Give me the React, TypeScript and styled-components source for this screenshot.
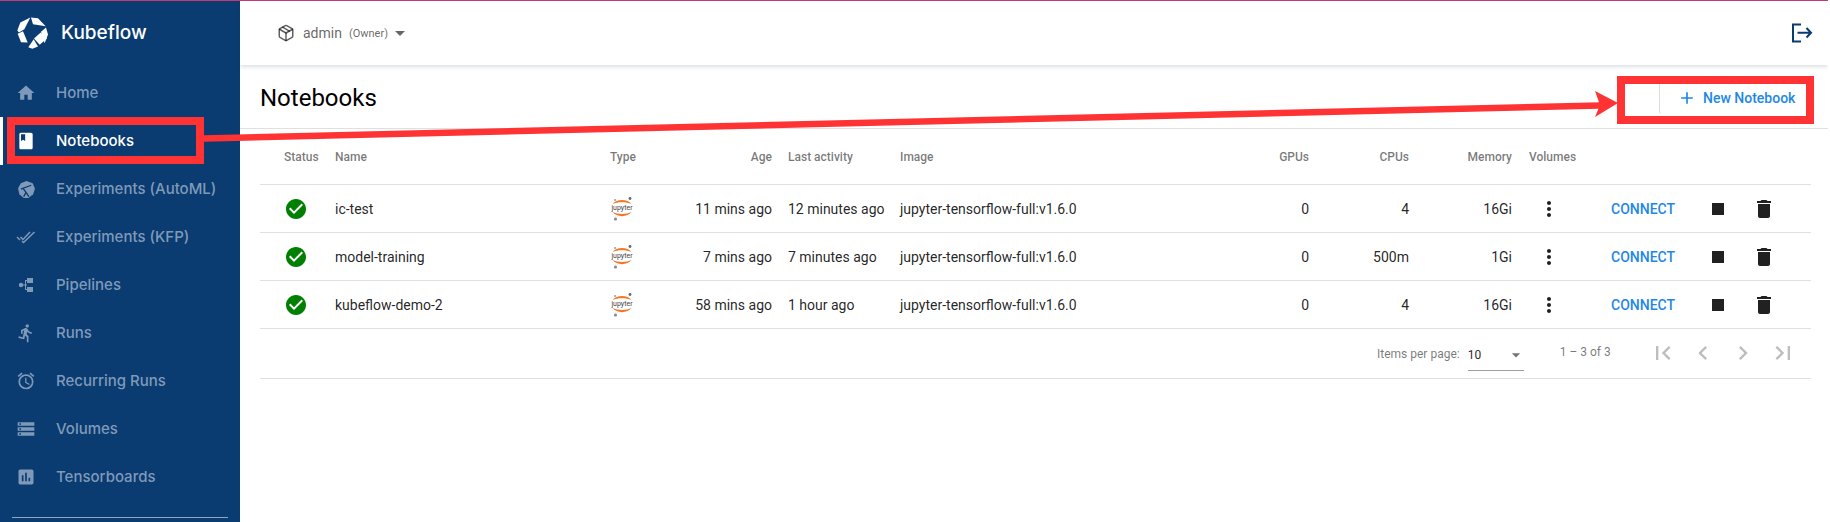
import React from "react";
import styled, { createGlobalStyle } from "styled-components";
import {
  MdHome, MdBook, MdDirectionsRun, MdAlarm, MdStorage, MdAssessment, MdStop, MdDelete,
  MdMoreVert, MdCheckCircle, MdFirstPage, MdLastPage, MdChevronLeft, MdChevronRight, MdAdd, MdArrowDropDown,
} from "react-icons/md";
import { Package } from "lucide-react";

const Global = createGlobalStyle`
  html, body { margin: 0; padding: 0; background: #fff; }
  body { font-family: Roboto, "Liberation Sans", sans-serif; }
`;

const Page = styled.div`
  position: relative;
  width: 1828px;
  height: 522px;
  overflow: hidden;
  display: flex;
  flex-direction: column;
`;
const Stripe = styled.div`
  height: 1px;
  flex: none;
  background: #c23a78;
`;
const Shell = styled.div`
  flex: 1;
  display: flex;
  min-height: 0;
`;
const Sidebar = styled.nav`
  width: 240px;
  flex: none;
  background: #0a3b71;
  display: flex;
  flex-direction: column;
`;
const Brand = styled.div`
  height: 68px;
  flex: none;
  display: flex;
  align-items: flex-start;
  padding: 16px 0 0 17px;
  box-sizing: border-box;
  gap: 13px;
`;
const BrandName = styled.span`
  font-family: Inter, sans-serif;
  font-size: 19px;
  font-weight: 500;
  color: #fff;
  line-height: 32px;
`;
const NavItem = styled.div<{ $active?: boolean }>`
  height: 48px;
  flex: none;
  display: flex;
  align-items: center;
  box-sizing: border-box;
  border-left: 3px solid ${(p) => (p.$active ? "#fff" : "transparent")};
  color: ${(p) => (p.$active ? "#fff" : "#7f9ab9")};
  font-family: Inter, sans-serif;
  font-size: 15px;
  font-weight: 500;
`;
const NavIcon = styled.span`
  width: 24px;
  height: 24px;
  margin-left: 11px;
  margin-right: 19px;
  display: flex;
  align-items: center;
  justify-content: center;
  font-size: 20px;
`;
const NavLabel = styled.span`
  margin-bottom: 2px;
  margin-left: -1px;
`;
const NavRule = styled.div`
  margin: 16px 12px 0;
  height: 1px;
  flex: none;
  background: #8fa6c1;
`;
const Main = styled.main`
  flex: 1;
  min-width: 0;
  display: flex;
  flex-direction: column;
`;
const TopBar = styled.header`
  height: 64px;
  flex: none;
  display: flex;
  align-items: center;
  padding: 0 15px 0 37px;
  box-sizing: border-box;
  box-shadow: 0 2px 4px rgba(40, 60, 90, 0.16);
  position: relative;
  color: rgba(0, 0, 0, 0.62);
`;
const Namespace = styled.span`
  font-size: 14px;
  margin-left: 8px;
`;
const Role = styled.span`
  font-size: 11px;
  margin-left: 7px;
`;
const Caret = styled.span`
  display: flex;
  font-size: 24px;
  color: rgba(0, 0, 0, 0.6);
`;
const LogoutButton = styled.span`
  margin-left: auto;
  display: flex;
`;
const TitleBar = styled.div`
  height: 64px;
  flex: none;
  display: flex;
  align-items: center;
  justify-content: flex-end;
  box-sizing: border-box;
  border-bottom: 1px solid #e0e0e0;
  padding: 2px 21px 0 20px;
  position: relative;
`;
const Title = styled.h1`
  margin: 0 auto 0 0;
  font-size: 24px;
  font-weight: 400;
  color: #000;
`;
const NewButton = styled.div`
  height: 32px;
  width: 148px;
  margin-right: 0;
  box-sizing: border-box;
  border-left: 1px solid #dcdcdc;
  border-bottom-left-radius: 3px;
  display: flex;
  align-items: center;
  padding-left: 17px;
  gap: 6px;
  color: #1e88e5;
  font-size: 14px;
  font-weight: 500;
`;
const Table = styled.div`
  margin: 0 17px 0 20px;
  display: flex;
  flex-direction: column;
`;
const tracks = "75px 275px 85px 93px 112px 300px 125px 100px 104px 82px 83px 47px 70px";
const HeadRow = styled.div`
  display: grid;
  grid-template-columns: ${tracks};
  height: 56px;
  box-sizing: border-box;
  border-bottom: 1px solid #e0e0e0;
  align-items: center;
  font-size: 12px;
  font-weight: 500;
  color: rgba(0, 0, 0, 0.54);
`;
const Row = styled.div`
  display: grid;
  grid-template-columns: ${tracks};
  height: 48px;
  box-sizing: border-box;
  border-bottom: 1px solid #e0e0e0;
  align-items: center;
  font-size: 14px;
  color: rgba(0, 0, 0, 0.87);
`;
const Cell = styled.div<{ $end?: boolean; $pad?: number }>`
  text-align: ${(p) => (p.$end ? "right" : "left")};
  padding-right: ${(p) => (p.$end ? 16 : 0)}px;
  padding-left: ${(p) => p.$pad ?? 0}px;
  white-space: nowrap;
  display: ${(p) => (p.$end ? "block" : "flex")};
  align-items: center;
`;
const VolumesCell = styled(Cell)`
  padding-right: 17px;
`;
const IconCell = styled.div<{ $pad: number }>`
  display: flex;
  align-items: center;
  padding-left: ${(p) => p.$pad}px;
  color: #212121;
  font-size: 24px;
`;
const StatusIcon = styled.div`
  display: flex;
  padding-left: 24px;
  color: #008000;
  font-size: 24px;
`;
const Connect = styled.div`
  color: #1e88e5;
  font-weight: 500;
  font-size: 14px;
`;
const Paginator = styled.div`
  height: 50px;
  box-sizing: border-box;
  border-bottom: 1px solid #e0e0e0;
  display: flex;
  align-items: center;
  font-size: 12px;
  color: rgba(0, 0, 0, 0.54);
  padding-left: 1117px;
`;
const PageSelect = styled.div`
  width: 56px;
  height: 32px;
  margin-left: 8px;
  box-sizing: border-box;
  border-bottom: 1px solid #9e9e9e;
  display: flex;
  align-items: center;
  justify-content: space-between;
  color: rgba(0, 0, 0, 0.87);
  margin-top: 3px;
  font-size: 20px;
`;
const PageValue = styled.span`
  font-size: 12px;
`;
const SelectCaret = styled.span`
  display: flex;
  margin-right: -2px;
  color: rgba(0, 0, 0, 0.54);
`;
const Range = styled.span`
  margin-left: 36px;
  margin-bottom: 4px;
  width: 80px;
`;
const PageButtons = styled.div`
  display: flex;
  margin-left: 9px;
  color: #bdbdbd;
  font-size: 28px;
  gap: 12px;
  margin-bottom: 1px;
  & > svg { display: block; }
`;
const Callout = styled.div<{ $x: number; $y: number; $w: number; $h: number }>`
  position: absolute;
  left: ${(p) => p.$x}px;
  top: ${(p) => p.$y}px;
  width: ${(p) => p.$w}px;
  height: ${(p) => p.$h}px;
  box-sizing: border-box;
  border: 8px solid #ff3333;
`;
const ArrowLayer = styled.svg`
  position: absolute;
  left: 0;
  top: 0;
  pointer-events: none;
`;

const KubeflowLogo = () => (
  <svg width="31" height="32" viewBox="50 52 93 95" fill="#fff">
    <polygon points="51,92 60,68 90,53 72,88 56,98" />
    <polygon points="92,53 113,55 136,79 98,73" />
    <polygon points="137,83 143,104 133,130 122,96" />
    <polygon points="121,98 140,116 118,135 101,116" />
    <polygon points="52,102 68,94 82,128 62,127" />
    <polygon points="84,142 100,118 113,140 96,147" />
  </svg>
);
const TelescopeIcon = () => (
  <svg width="17" height="17" viewBox="0 0 18 18">
    <polygon fill="currentColor" points="9,0 15.5,2.5 18,8 16,14 11,18 6,18 1.5,14 0,8 3,2.5" />
    <path d="M3 8.5 14 4.5M5.5 8 8.5 12M8.5 12 6 16.5M8.5 12 11.5 16.5" stroke="#0a3b71" strokeWidth="1.4" fill="none" />
  </svg>
);
const DoneTrailIcon = () => (
  <svg width="20" height="14" viewBox="0 0 20 14" fill="none" stroke="currentColor" strokeWidth="1.5">
    <path d="M1 7 4 10M6 11 7.5 12.5 18.5 2M4.5 7 7 9.5 14 2" />
  </svg>
);
const PipelineIcon = () => (
  <svg width="16" height="16" viewBox="0 0 16 16" fill="currentColor">
    <circle cx="3" cy="8" r="2.2" />
    <rect x="9" y="1" width="6" height="5" />
    <rect x="9" y="10" width="6" height="5" />
    <path d="M4 7.400h3V3h2v1H8v3.400h1v1H8V12h1v1H7V8.600H4z" />
  </svg>
);
const LogoutIcon = () => (
  <svg width="22" height="20" viewBox="0 0 22 20" fill="none" stroke="#0a3b71" strokeWidth="2">
    <path d="M10 1.500H2V18.500H10M6.500 9.800H20M15.500 5 20 9.800 15.500 14.500" />
  </svg>
);
const JupyterLogo = () => (
  <svg width="24" height="26" viewBox="0 0 24 26">
    <path d="M2.500 8C6.500 2.800 17.500 2.800 21.500 8C16.500 5.800 7.500 5.800 2.500 8Z" fill="#f37726" />
    <path d="M2.500 16C6.500 21.500 17.500 21.500 21.500 16C16.500 18.500 7.500 18.500 2.500 16Z" fill="#f37726" />
    <circle cx="20" cy="2.500" r="1.400" fill="#666" />
    <circle cx="5" cy="4" r="0.800" fill="#555" />
    <circle cx="5.500" cy="23" r="1.600" fill="#8a8a8a" />
    <text x="12" y="14.200" textAnchor="middle" fontFamily="Roboto, sans-serif" fontSize="7" fill="#444">jupyter</text>
  </svg>
);

const navItems = [
  { label: "Home", icon: <MdHome /> },
  { label: "Notebooks", icon: <MdBook />, active: true },
  { label: "Experiments (AutoML)", icon: <TelescopeIcon /> },
  { label: "Experiments (KFP)", icon: <DoneTrailIcon /> },
  { label: "Pipelines", icon: <PipelineIcon /> },
  { label: "Runs", icon: <MdDirectionsRun /> },
  { label: "Recurring Runs", icon: <MdAlarm /> },
  { label: "Volumes", icon: <MdStorage /> },
  { label: "Tensorboards", icon: <MdAssessment /> },
];
const rows = [
  { name: "ic-test", age: "11 mins ago", last: "12 minutes ago", cpu: "4", mem: "16Gi" },
  { name: "model-training", age: "7 mins ago", last: "7 minutes ago", cpu: "500m", mem: "1Gi" },
  { name: "kubeflow-demo-2", age: "58 mins ago", last: "1 hour ago", cpu: "4", mem: "16Gi" },
];

export default function App() {
  return (
    <Page>
      <Global />
      <Stripe />
      <Shell>
        <Sidebar>
          <Brand>
            <KubeflowLogo />
            <BrandName>Kubeflow</BrandName>
          </Brand>
          {navItems.map((n) => (
            <NavItem key={n.label} $active={n.active}>
              <NavIcon>{n.icon}</NavIcon>
              <NavLabel>{n.label}</NavLabel>
            </NavItem>
          ))}
          <NavRule />
        </Sidebar>
        <Main>
          <TopBar>
            <Package size={18} strokeWidth={2} />
            <Namespace>admin</Namespace>
            <Role>(Owner)</Role>
            <Caret><MdArrowDropDown /></Caret>
            <LogoutButton><LogoutIcon /></LogoutButton>
          </TopBar>
          <TitleBar>
            <Title>Notebooks</Title>
            <NewButton><MdAdd size={20} />New Notebook</NewButton>
          </TitleBar>
          <Table>
            <HeadRow>
              <Cell $pad={24}>Status</Cell>
              <Cell>Name</Cell>
              <Cell>Type</Cell>
              <Cell $end>Age</Cell>
              <Cell>Last activity</Cell>
              <Cell>Image</Cell>
              <Cell $end>GPUs</Cell>
              <Cell $end>CPUs</Cell>
              <VolumesCell $end>Memory</VolumesCell>
              <Cell>Volumes</Cell>
              <Cell />
              <Cell />
              <Cell />
            </HeadRow>
            {rows.map((r) => (
              <Row key={r.name}>
                <StatusIcon><MdCheckCircle /></StatusIcon>
                <Cell>{r.name}</Cell>
                <Cell><JupyterLogo /></Cell>
                <Cell $end>{r.age}</Cell>
                <Cell>{r.last}</Cell>
                <Cell>jupyter-tensorflow-full:v1.6.0</Cell>
                <Cell $end>0</Cell>
                <Cell $end>{r.cpu}</Cell>
                <VolumesCell $end>{r.mem}</VolumesCell>
                <IconCell $pad={8}><MdMoreVert /></IconCell>
                <Connect>CONNECT</Connect>
                <IconCell $pad={12}><MdStop /></IconCell>
                <IconCell $pad={11}><MdDelete /></IconCell>
              </Row>
            ))}
            <Paginator>
              Items per page:
              <PageSelect>
                <PageValue>10</PageValue>
                <SelectCaret><MdArrowDropDown /></SelectCaret>
              </PageSelect>
              <Range>1 – 3 of 3</Range>
              <PageButtons>
                <MdFirstPage />
                <MdChevronLeft />
                <MdChevronRight />
                <MdLastPage />
              </PageButtons>
            </Paginator>
          </Table>
        </Main>
      </Shell>
      <Callout $x={7} $y={117} $w={197} $h={47} />
      <Callout $x={1617} $y={76} $w={197} $h={48} />
      <ArrowLayer width="1828" height="522" viewBox="0 0 1828 522">
        <line x1="204" y1="138.400" x2="1600" y2="105.500" stroke="#ff3333" strokeWidth="6.500" />
        <polygon points="1595,91 1618,103 1595,117 1600,105" fill="#ff3333" />
      </ArrowLayer>
    </Page>
  );
}
